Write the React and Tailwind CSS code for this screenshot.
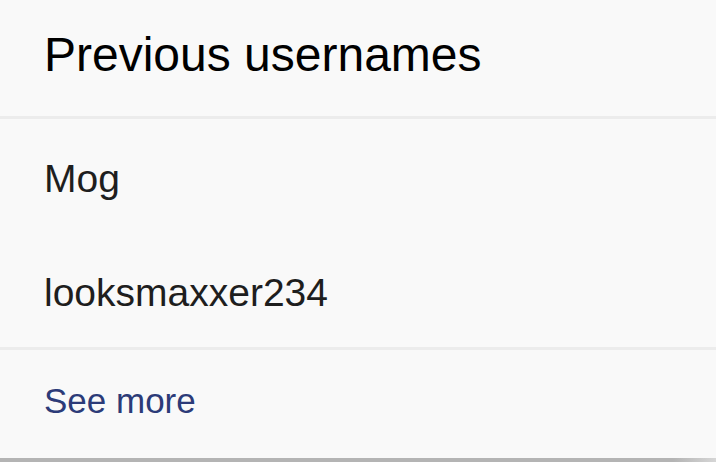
import React from 'react';

const usernames = ['Mog', 'looksmaxxer234'];

const PreviousUsernames = () => {
  return (
    <div
      className="w-[716px] h-[462px] bg-[#f9f9f9] flex flex-col overflow-hidden"
      style={{ fontFamily: '"Liberation Sans", Arial, Helvetica, sans-serif' }}
    >
      {/* Header */}
      <div className="h-[116px] pt-[31px] pl-[44px]">
        <h2 className="text-[48px] leading-none text-black font-normal">Previous usernames</h2>
      </div>
      <div className="h-[3px] bg-[#ececec]" />

      {/* Username list */}
      {usernames.map((name) => (
        <div key={name} className="h-[114px] pt-[40px] pl-[44px]">
          <p className="text-[39px] leading-none text-[#1e1e1e]">{name}</p>
        </div>
      ))}
      <div className="h-[3px] bg-[#ececec]" />

      {/* Footer link */}
      <div className="h-[108px] pt-[33px] pl-[44px]">
        <a className="text-[35px] leading-none text-[#2c3b78] cursor-pointer">See more</a>
      </div>

      {/* Card bottom shadow */}
      <div className="h-[4px] bg-[linear-gradient(to_right,#b4b4b4_0%,#b4b4b4_94%,#d6d6d6_100%)]" />
    </div>
  );
};

export default PreviousUsernames;
